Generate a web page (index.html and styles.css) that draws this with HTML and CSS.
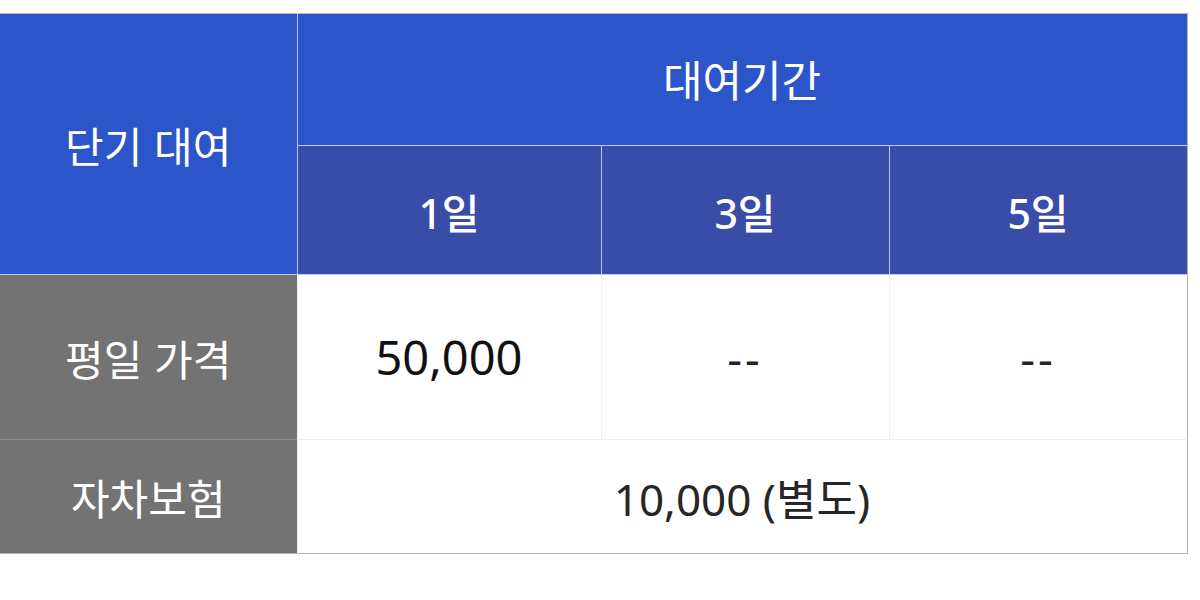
FILE: index.html
```html
<!DOCTYPE html>
<html lang="ko">
<head>
    <meta charset="UTF-8">
    <meta name="viewport" content="width=device-width, initial-scale=1.0">
    <title>단기 대여 요금</title>
    <link rel="stylesheet" href="styles.css">
</head>
<body>
    <table class="rent-table">
        <colgroup>
            <col class="col-label">
            <col class="col-1">
            <col class="col-3">
            <col class="col-5">
        </colgroup>
        <thead>
            <tr class="row-title">
                <th rowspan="2" class="corner">단기 대여</th>
                <th colspan="3" class="period">대여기간</th>
            </tr>
            <tr class="row-days">
                <th class="day">1일</th>
                <th class="day">3일</th>
                <th class="day">5일</th>
            </tr>
        </thead>
        <tbody>
            <tr class="row-price">
                <th class="side">평일 가격</th>
                <td class="price">50,000</td>
                <td class="empty">--</td>
                <td class="empty">--</td>
            </tr>
            <tr class="row-insurance">
                <th class="side">자차보험</th>
                <td colspan="3" class="insurance">10,000 (별도)</td>
            </tr>
        </tbody>
    </table>
</body>
</html>
```

FILE: styles.css
```css
* {
    margin: 0;
    padding: 0;
    box-sizing: border-box;
}

body {
    background-color: #fff;
    font-family: "Noto Sans", "Noto Sans CJK KR", sans-serif;
    padding-top: 13px;
}

.rent-table {
    width: 1187px;
    table-layout: fixed;
    border-collapse: collapse;
    border-top: 1px solid #b4b4b4;
    border-right: 1px solid #b4b4b4;
    border-bottom: 1px solid #b4b4b4;
}

.col-label { width: 297px; }
.col-1 { width: 304px; }
.col-3 { width: 288px; }
.col-5 { width: 298px; }

th,
td {
    text-align: center;
    vertical-align: middle;
    font-weight: normal;
}

thead th {
    color: #fff;
    font-family: "Noto Sans CJK KR", sans-serif;
    font-size: 42px;
    border: 1px solid #c3c9e8;
}

.corner,
.period {
    background-color: #2b55c8;
}

.corner {
    border-left: none;
    border-top: none;
}

.period {
    border-top: none;
    border-right: none;
    font-size: 43px;
    padding-bottom: 4px;
}

.day {
    background-color: #394ca8;
    font-family: "Noto Sans", "Noto Sans CJK KR", sans-serif;
    font-weight: 500;
    font-size: 41px;
    padding-top: 2px;
}

.day:last-child {
    border-right: none;
}

.row-title { height: 132px; }
.row-days { height: 129px; }
.row-price { height: 165px; }
.row-insurance { height: 114px; }

.side {
    background-color: #737373;
    color: #fff;
    font-family: "Noto Sans CJK KR", sans-serif;
    font-size: 42px;
    border-top: 1px solid #8a8a8a;
}

tbody td {
    border-left: 1px solid #efefef;
    border-top: 1px solid #efefef;
    color: #262626;
}

.price {
    color: #111;
    font-size: 47px;
}

.empty {
    font-size: 46px;
    letter-spacing: 3px;
}

.insurance {
    font-size: 44px;
}
```
